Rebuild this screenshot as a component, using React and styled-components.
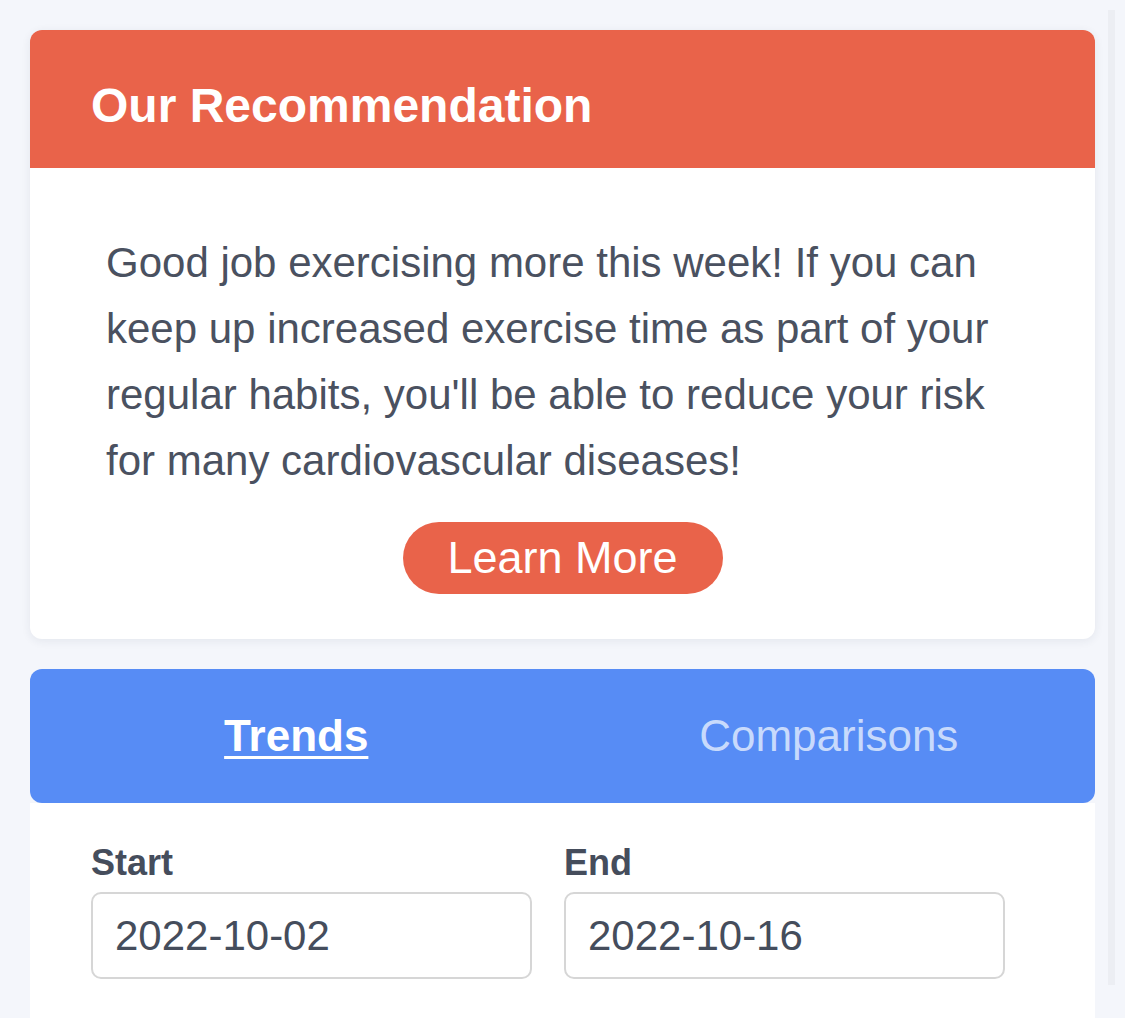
import React, { useState } from 'react'
import styled, { createGlobalStyle } from 'styled-components'

const GlobalStyle = createGlobalStyle`
  html, body {
    margin: 0;
    padding: 0;
    background: #f4f6fb;
    font-family: "Liberation Sans", Arial, sans-serif;
  }
`

function App() {
  const [tab, setTab] = useState('trends')
  return (
    <Page>
      <GlobalStyle />
      <Scroller />
      <Card>
        <CardHeader>Our Recommendation</CardHeader>
        <CardBody>
          <Message>
            Good job exercising more this week! If you can keep up increased exercise time as part of
            your regular habits, you'll be able to reduce your risk for many cardiovascular diseases!
          </Message>
          <PillButton>Learn More</PillButton>
        </CardBody>
      </Card>
      <Panel>
        <TabBar>
          <Tab active={tab === 'trends'} onClick={() => setTab('trends')}>Trends</Tab>
          <Tab active={tab === 'comparisons'} onClick={() => setTab('comparisons')}>Comparisons</Tab>
        </TabBar>
        <PanelBody>
          <Field>
            <Label>Start</Label>
            <DateBox>2022-10-02</DateBox>
          </Field>
          <Field>
            <Label>End</Label>
            <DateBox>2022-10-16</DateBox>
          </Field>
        </PanelBody>
      </Panel>
    </Page>
  )
}

export default App

const Page = styled.div`
  padding: 30px 30px 0 30px;
  width: 1065px;
  display: flex;
  flex-direction: column;
  gap: 30px;
  height: 988px;
  overflow: hidden;
`
// thin scroll indicator that sits over the right edge of the page
const Scroller = styled.div`
  position: fixed;
  top: 10px;
  left: 1108px;
  width: 7px;
  height: 975px;
  background: #eceef3;
`
const Card = styled.div`
  background: #fff;
  border-radius: 12px;
  overflow: hidden;
  box-shadow: 0 2px 10px rgba(40, 50, 80, 0.08);
  flex-shrink: 0;
`
const CardHeader = styled.div`
  height: 138px;
  background: #e9634a;
  color: #fff;
  font-size: 48px;
  font-weight: bold;
  display: flex;
  align-items: center;
  padding-left: 61px;
  padding-top: 12px;
  box-sizing: border-box;
`
const CardBody = styled.div`
  padding: 62px 76px 45px 76px;
  display: flex;
  flex-direction: column;
  align-items: center;
`
const Message = styled.p`
  margin: 0;
  font-size: 42px;
  line-height: 66px;
  color: #4a5160;
  align-self: stretch;
`
const PillButton = styled.button`
  margin-top: 28px;
  width: 320px;
  height: 72px;
  border: none;
  border-radius: 36px;
  background: #e9634a;
  color: #fff;
  font-family: "Liberation Sans", Arial, sans-serif;
  font-size: 45px;
  padding: 0;
  cursor: pointer;
`
const Panel = styled.div`
  display: flex;
  flex-direction: column;
  flex-shrink: 0;
`
const TabBar = styled.div`
  height: 134px;
  background: #578cf5;
  border-radius: 12px;
  display: grid;
  grid-template-columns: 1fr 1fr;
  align-items: center;
`
const Tab = styled.div`
  text-align: center;
  font-size: 44px;
  color: ${p => (p.active ? '#fff' : '#c8dafc')};
  font-weight: ${p => (p.active ? 'bold' : 'normal')};
  text-decoration: ${p => (p.active ? 'underline' : 'none')};
  text-decoration-thickness: 3px;
  text-underline-offset: 5px;
  cursor: pointer;
`
const PanelBody = styled.div`
  background: #fff;
  padding: 39px 61px 80px 61px;
  display: flex;
  gap: 32px;
`
const Field = styled.div`
  display: flex;
  flex-direction: column;
  width: 441px;
`
const Label = styled.div`
  font-size: 36px;
  font-weight: bold;
  color: #454d5c;
  margin-bottom: 8px;
`
const DateBox = styled.div`
  height: 87px;
  box-sizing: border-box;
  border: 2px solid #d6d6d6;
  border-radius: 10px;
  display: flex;
  align-items: center;
  padding-left: 22px;
  font-size: 42px;
  color: #454d5c;
`
